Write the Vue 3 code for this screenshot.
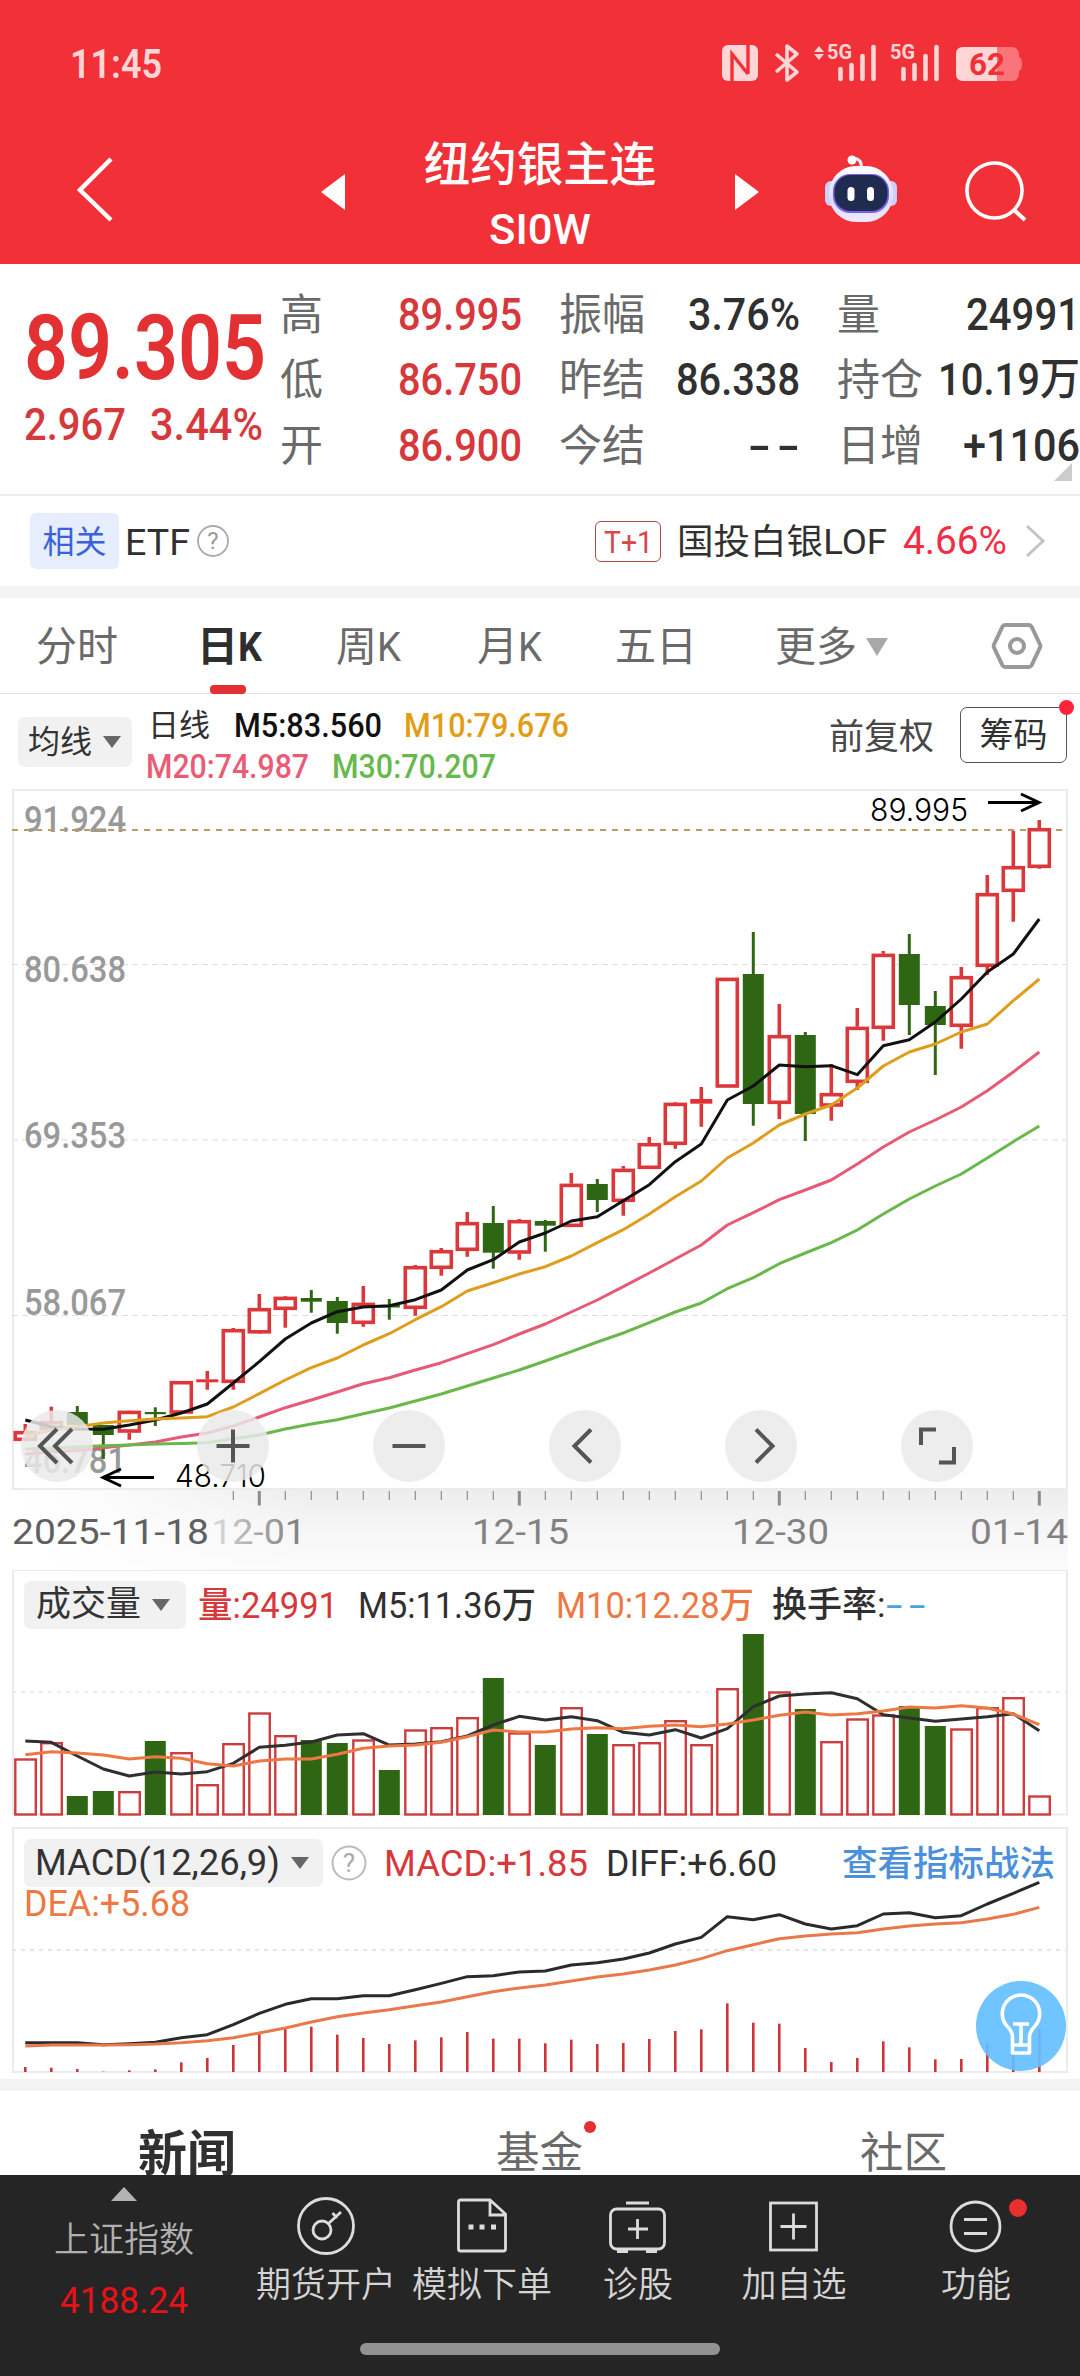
<script setup>
// v-fit="px": squeezes or stretches a label horizontally to the given width
const vFit = {
  mounted(el, { value }) {
    const natural = el.getBoundingClientRect().width
    el.style.width = value + 'px'
    el.style.transform = `scaleX(${value / natural})`
  },
}

const quotes = [
  { label: '高', value: '89.995', w: 124, up: true },
  { label: '振幅', value: '3.76%', w: 112 },
  { label: '量', value: '24991', w: 114 },
  { label: '低', value: '86.750', w: 124, up: true },
  { label: '昨结', value: '86.338', w: 124 },
  { label: '持仓', value: '10.19万', w: 142 },
  { label: '开', value: '86.900', w: 124, up: true },
  { label: '今结', value: '--', w: 58, none: true },
  { label: '日增', value: '+1106', w: 117 },
]

const X0 = 25.3
const STEP = 26
const cx = (i) => X0 + i * STEP
const line = (ys) => ys.map((y, i) => `${cx(i).toFixed(1)},${y}`).join(' ')

// [rising, high, body top, body bottom, low] in chart coordinates
const candles = [
  [1, 1424, 1431, 1441, 1441], [1, 1406.7, 1421, 1430, 1430], [0, 1406, 1412, 1425, 1425],
  [0, 1425, 1425, 1435, 1459], [1, 1411, 1410.7, 1432.7, 1439.7], [0, 1407.3, 1412, 1414.2, 1426],
  [1, 1381, 1381, 1413.7, 1413.7], [1, 1371, 1379.3, 1382.3, 1389.7], [1, 1328, 1329, 1383, 1389.7],
  [1, 1294, 1308, 1333.5, 1334], [1, 1296, 1296.7, 1310, 1327.7], [0, 1290, 1298, 1301.7, 1312.7],
  [0, 1297, 1301, 1323, 1333.7], [1, 1286, 1302.7, 1324, 1326.7], [0, 1299, 1305, 1307.5, 1319.7],
  [1, 1265, 1266, 1309, 1315.7], [1, 1248, 1250, 1269, 1275.7], [1, 1212, 1222, 1251, 1256.7],
  [0, 1206, 1223, 1252.7, 1268.7], [1, 1219, 1220, 1253.7, 1259.7], [0, 1220, 1221, 1225.7, 1251.7],
  [1, 1173, 1183.7, 1227, 1227], [0, 1179, 1184, 1200, 1212], [1, 1166, 1168.7, 1202, 1215.7],
  [1, 1137, 1143, 1169, 1169], [1, 1102, 1102.7, 1145, 1148.7], [1, 1087, 1099, 1103.7, 1126.7],
  [1, 977.7, 977.7, 1087.7, 1087.7], [0, 932, 974, 1104, 1125.7], [1, 1004, 1035, 1104, 1119],
  [0, 1032, 1035, 1114, 1141], [1, 1064, 1093, 1106.7, 1120.7], [1, 1008, 1026.7, 1083, 1090],
  [1, 951, 953.7, 1029, 1040.7], [0, 934, 954, 1005, 1035], [0, 991, 1006, 1025, 1075],
  [1, 967, 976, 1027, 1048.7], [1, 875, 893, 967, 975], [1, 831, 866, 892, 921.7],
  [1, 820, 828, 868, 868.7],
]
const ma5 = [1420, 1426.7, 1429, 1429.3, 1425, 1420, 1413, 1404, 1383, 1361.7, 1339, 1323, 1311.7, 1307, 1305.7, 1299.7, 1290, 1270, 1259.7, 1242, 1233, 1221, 1216.7, 1200.7, 1184.7, 1161.7, 1144, 1100, 1086, 1065, 1066.7, 1065.7, 1074.7, 1045.7, 1039.7, 1022, 999, 972, 954, 919]
const ma10 = [1436, 1430, 1426.7, 1423, 1420.7, 1419, 1418, 1416.7, 1407, 1393.7, 1380, 1367.7, 1358, 1345, 1333.7, 1319.7, 1306.7, 1291, 1282.7, 1274, 1266.7, 1256, 1242.7, 1229.7, 1214, 1196.7, 1181, 1158, 1143, 1125, 1114, 1105, 1088, 1066, 1052, 1044, 1032, 1024, 1000.7, 979]
const ma20 = [1454, 1452, 1450.7, 1447.7, 1445, 1442, 1437, 1433, 1426, 1417, 1407.7, 1400, 1392, 1383.7, 1377.7, 1370, 1362.7, 1353.7, 1344.7, 1334, 1324, 1312, 1300, 1286.7, 1273, 1259, 1245, 1225, 1212.7, 1199.7, 1190, 1180, 1164, 1147, 1132, 1120, 1107, 1090.7, 1072, 1052]
const ma30 = [1449, 1448, 1447, 1445.7, 1445, 1444, 1443.4, 1442.7, 1438.7, 1435, 1429, 1424, 1419.7, 1413.7, 1408, 1401, 1394, 1386, 1378, 1370, 1361, 1351.7, 1342, 1333, 1322.7, 1312, 1303, 1288.7, 1277.7, 1263.7, 1253, 1242.7, 1230, 1214, 1199, 1186, 1174, 1158, 1141.7, 1126]

const priceLabels = [['91.924', 832], ['80.638', 982], ['69.353', 1148], ['58.067', 1315], ['46.781', 1473]]
const ticks = Array.from({ length: 32 }, (_, k) => k + 8)

const volTops = [1759, 1742.7, 1796, 1791, 1791.7, 1741, 1752.7, 1784.7, 1743.7, 1713, 1735.7, 1740, 1743, 1740, 1770, 1730, 1727.7, 1717.7, 1678, 1733, 1745, 1707.7, 1734, 1744.7, 1742.7, 1720.7, 1744.7, 1688.7, 1634, 1692, 1709, 1741.7, 1719, 1715, 1706, 1726, 1729, 1707.7, 1697.7, 1796]
const third = (base) => (v) => base + v / 3
const vm5 = [543, 547, 588, 627, 648, 636, 642, 635, 610, 562, 556, 546, 525, 521, 555, 552, 545, 528, 495, 469, 480, 470, 482, 517, 525, 509, 534, 506, 440, 408, 402, 398, 416, 464, 474, 484, 477, 470, 461, 512].map(third(1560))
const vm10 = [584, 575, 579, 585, 597, 590, 595, 611, 618, 603, 597, 597, 583, 565, 558, 555, 547, 530, 510, 516, 516, 507, 503, 506, 499, 495, 500, 492, 480, 466, 456, 465, 461, 453, 441, 444, 437, 444, 462, 494].map(third(1560))

const diff = [668, 668, 668, 674, 671, 667, 653, 644, 614, 580, 553, 536, 536, 527, 527, 509, 490, 470, 467, 456, 453, 435, 428, 417, 399, 372, 352, 290, 299, 284, 312, 327, 317, 282, 278, 293, 287, 252, 220, 187].map(third(1820))
const dea = [678, 675, 675, 675, 674, 672, 668, 662, 653, 639, 624, 606, 590, 579, 569, 557, 546, 530, 515, 504, 495, 483, 471, 462, 450, 435, 416, 392, 374, 356, 348, 342, 338, 327, 318, 312, 308, 297, 283, 262].map(third(1820))
const macd = [741, 743, 747, 755, 751, 748, 727, 714, 675, 638, 626, 620, 644, 654, 672, 661, 652, 636, 656, 656, 670, 659, 672, 669, 657, 633, 628, 550, 608, 611, 684, 726, 714, 664, 682, 718, 717, 669, 640, 626].map(third(1820))
</script>

<template>
  <div class="screen">
    <header class="top">
      <div class="status">
        <span v-fit="92" class="clock">11:45</span>
        <svg class="status-icons" width="310" height="50" viewBox="715 40 310 50">
          <rect x="722" y="46" width="36" height="36" rx="6" fill="#ffd5d6" />
          <path d="M732 82V55L748 75 M748 46V75 M732 55L748 75" fill="none" stroke="#f23037" stroke-width="3.400" />
          <path d="M776 55l21 18-10 8V47l10 8-21 18" fill="none" stroke="#ffd5d6" stroke-width="3.600" stroke-linejoin="round" />
          <path d="M814 53l5-6 5 6z M814 55l5 6 5-6z" fill="#ffd5d6" />
          <g stroke="#ffd5d6" stroke-width="4.600" stroke-linecap="round">
            <path d="M840.500 70v10M851.500 66v14M862.500 57v23M873.500 48v32" />
            <path d="M903.500 70v10M914.500 66v14M925.500 57v23M936.500 48v32" />
          </g>
          <text x="827" y="60" textLength="25" lengthAdjust="spacingAndGlyphs" class="net">5G</text>
          <text x="890" y="60" textLength="25" lengthAdjust="spacingAndGlyphs" class="net">5G</text>
          <path d="M963 48h34v34h-34q-7 0-7-7v-20q0-7 7-7z" fill="#ffd5d6" />
          <path d="M997 48h14q8 0 8 8v2q3 1 3 7t-3 7v2q0 8-8 8h-14z" fill="#f97579" />
          <text x="969" y="76" textLength="36" lengthAdjust="spacingAndGlyphs" class="batt">62</text>
        </svg>
      </div>
      <div class="nav">
        <svg width="50" height="80" viewBox="70 150 50 80" class="back"><path d="M111 159L80 190l31 30" fill="none" stroke="#fff" stroke-width="4.500" /></svg>
        <svg width="26" height="40" viewBox="0 0 26 40" class="prev"><path d="M25 2v36L1 20z" fill="#fff" /></svg>
        <div class="title">
          <span class="name">纽约银主连</span>
          <span v-fit="102" class="code">SI0W</span>
        </div>
        <svg width="26" height="40" viewBox="0 0 26 40" class="next"><path d="M1 2v36l24-18z" fill="#fff" /></svg>
        <svg width="80" height="80" viewBox="820 150 80 80" class="robot">
          <defs>
            <linearGradient id="shell" x1="0" y1="0" x2="0" y2="1"><stop offset="0" stop-color="#fff" /><stop offset=".6" stop-color="#d9dcff" /><stop offset="1" stop-color="#f3e8ff" /></linearGradient>
          </defs>
          <path d="M861 169q2-10-8-11" fill="none" stroke="#e9e6ff" stroke-width="3" />
          <circle cx="852" cy="160" r="4.500" fill="#fff" />
          <rect x="825" y="181" width="12" height="25" rx="6" fill="#cfd0fa" />
          <rect x="885" y="181" width="12" height="25" rx="6" fill="#cfd0fa" />
          <rect x="829" y="166" width="64" height="56" rx="27" fill="url(#shell)" />
          <rect x="833" y="174" width="56" height="39" rx="17" fill="#7660e8" />
          <rect x="834.500" y="175" width="53" height="36" rx="16" fill="#202b50" />
          <rect x="847.500" y="187" width="7" height="14" rx="3.500" fill="#fff" />
          <rect x="867" y="187" width="7" height="14" rx="3.500" fill="#fff" />
        </svg>
        <svg width="70" height="70" viewBox="960 155 70 70" class="search"><path d="M1014 210l11 10" stroke="#fff" stroke-width="4" /><circle cx="994.500" cy="190.500" r="27.500" fill="none" stroke="#fff" stroke-width="3.600" /></svg>
      </div>
    </header>

    <section class="quote">
      <div class="last">
        <span v-fit="242" class="price">89.305</span>
        <div class="chg"><span v-fit="102">2.967</span><span v-fit="113">3.44%</span></div>
      </div>
      <div class="grid">
        <div v-for="q in quotes" :key="q.label" class="cell">
          <span class="k">{{ q.label }}</span>
          <span v-fit="q.w" class="v" :class="{ up: q.up, none: q.none }">{{ q.value }}</span>
        </div>
      </div>
      <i class="corner"></i>
    </section>

    <section class="etf">
      <span class="tag">相关</span>
      <span v-fit="65" class="etf-t">ETF</span>
      <svg class="q1" width="34" height="34" viewBox="0 0 34 34"><circle cx="17" cy="17" r="15" fill="none" stroke="#aaa" stroke-width="1.800" /><text x="17" y="25" text-anchor="middle" class="qm">?</text></svg>
      <span class="t1"><b v-fit="49">T+1</b></span>
      <span v-fit="210" class="fund">国投白银LOF</span>
      <span v-fit="104" class="pct">4.66%</span>
      <svg width="22" height="34" viewBox="0 0 22 34"><path d="M2 2l16 15L2 32" fill="none" stroke="#c4c4c4" stroke-width="3" /></svg>
    </section>
    <div class="band"></div>

    <nav class="tabs">
      <span>分时</span><span class="on">日<b v-fit="24">K</b></span><span>周<b v-fit="24">K</b></span><span>月<b v-fit="24">K</b></span><span>五日</span><span>更多<i class="tri big"></i></span>
      <svg width="52" height="50" viewBox="0 0 52 50"><path d="M14.500 4h23q2 0 3 1.500L49 23.500q.7 1.500 0 3L40.500 44.500q-1 1.500-3 1.500h-23q-2 0-3-1.500L3 26.500q-.7-1.500 0-3L11.500 5.500q1-1.500 3-1.500z" fill="none" stroke="#999" stroke-width="4" /><circle cx="26" cy="25" r="7" fill="none" stroke="#999" stroke-width="4" /></svg>
    </nav>

    <section class="ma">
      <span class="pill p1">均线<i class="tri"></i></span>
      <div class="ma-vals">
        <div><span class="cn">日线</span><span v-fit="148" class="m5">M5:83.560</span><span v-fit="165" class="m10">M10:79.676</span></div>
        <div><span v-fit="163" class="m20">M20:74.987</span><span v-fit="164" class="m30">M30:70.207</span></div>
      </div>
      <span class="fq">前复权</span>
      <span class="chip">筹码<i class="dot"></i></span>
    </section>

    <section class="panel main">
      <svg width="1080" height="785" viewBox="0 785 1080 785">
        <defs>
          <linearGradient id="shade" x1="0" y1="0" x2="0" y2="1"><stop offset="0" stop-color="#ededed" /><stop offset=".5" stop-color="#f6f6f6" /><stop offset="1" stop-color="#fbfbfb" /></linearGradient>
          <linearGradient id="fadeL" x1="0" y1="0" x2="1" y2="0"><stop offset="0" stop-color="#fff" /><stop offset=".25" stop-color="#fff" stop-opacity=".85" /><stop offset="1" stop-color="#fff" stop-opacity="0" /></linearGradient>
          <linearGradient id="dateFade" gradientUnits="userSpaceOnUse" x1="212" y1="0" x2="300" y2="0"><stop offset="0" stop-color="#ddd" /><stop offset=".5" stop-color="#aaa" /><stop offset="1" stop-color="#808080" /></linearGradient>
        </defs>
        <rect x="12" y="1490" width="1056" height="80" fill="url(#shade)" />
        <rect x="12" y="1490" width="300" height="80" fill="url(#fadeL)" />
        <rect x="13" y="790" width="1054" height="699" fill="none" stroke="#ebebeb" stroke-width="2" />
        <path d="M12 964.500H1066M12 1315.500H1066" stroke="#dedede" stroke-width="1" stroke-dasharray="6 4" />
        <path d="M12 1139.800H1066" stroke="#ececec" stroke-width="2" stroke-dasharray="6 4" />
        <text v-for="p in priceLabels" :key="p[0]" x="24" :y="p[1]" textLength="102" lengthAdjust="spacingAndGlyphs" class="axis">{{ p[0] }}</text>
        <path d="M12 830H1066" stroke="#b79c63" stroke-width="2" stroke-dasharray="6 6" />
        <g v-for="(c, i) in candles" :key="i">
          <template v-if="c[0]">
            <path :d="`M${cx(i)} ${c[1]}V${c[2]}M${cx(i)} ${c[3]}V${c[4]}`" stroke="#dc383b" stroke-width="3.600" />
            <rect v-if="c[3] - c[2] < 6" :x="cx(i) - 11" :y="c[2]" width="22" :height="c[3] - c[2]" fill="#e23235" />
            <rect v-else :x="cx(i) - 10" :y="c[2] + 1.7" width="20" :height="c[3] - c[2] - 3.4" fill="#fff" stroke="#dc383b" stroke-width="3.600" />
          </template>
          <template v-else>
            <path :d="`M${cx(i)} ${c[1]}V${c[4]}`" stroke="#2f6614" stroke-width="3" />
            <rect :x="cx(i) - 10.5" :y="c[2]" width="21" :height="c[3] - c[2]" fill="#2f6614" />
          </template>
        </g>
        <g fill="none" stroke-width="3" stroke-linejoin="round">
          <polyline :points="line(ma5)" stroke="#111" />
          <polyline :points="line(ma10)" stroke="#df9d1d" />
          <polyline :points="line(ma20)" stroke="#e65a76" />
          <polyline :points="line(ma30)" stroke="#69b84c" />
        </g>
        <text x="870" y="820.500" textLength="98" lengthAdjust="spacingAndGlyphs" class="note">89.995</text>
        <path d="M988 802.500h50M1021 794l18 8.500-18 8.500" fill="none" stroke="#000" stroke-width="3" />
        <text x="175" y="1487" textLength="91" lengthAdjust="spacingAndGlyphs" class="note">48.710</text>
        <path d="M154 1477.500h-50M121 1469l-18 8.500 18 8.500" fill="none" stroke="#000" stroke-width="3" />
        <path v-for="t in ticks" :key="t" :d="`M${cx(t)} 1491v${t % 10 === 9 ? 14.5 : 9}`" stroke="#8c8c8c" :stroke-width="t % 10 === 9 ? 3 : 1.2" />
        <g class="date" fill="#828282">
          <text x="12" y="1544" textLength="197" lengthAdjust="spacingAndGlyphs" class="first">2025-11-18</text>
          <text x="211" y="1544" textLength="95" lengthAdjust="spacingAndGlyphs" fill="url(#dateFade)">12-01</text>
          <text x="472" y="1544" textLength="97" lengthAdjust="spacingAndGlyphs">12-15</text>
          <text x="732" y="1544" textLength="97" lengthAdjust="spacingAndGlyphs">12-30</text>
          <text x="970" y="1544" textLength="98" lengthAdjust="spacingAndGlyphs">01-14</text>
        </g>
      </svg>
      <div class="ctrls">
        <svg viewBox="0 0 72 72"><path d="M36 19L19 36l17 17M51 19L34 36l17 17" /></svg>
        <svg viewBox="0 0 72 72"><path d="M36 19.500v33M19.500 36h33" /></svg>
        <svg viewBox="0 0 72 72"><path d="M19.500 36h33" /></svg>
        <svg viewBox="0 0 72 72"><path d="M42 19.500L25.500 36 42 52.500" /></svg>
        <svg viewBox="0 0 72 72"><path d="M31 19.500L47.500 36 31 52.500" /></svg>
        <svg viewBox="0 0 72 72"><path d="M20 35V19.500h15M53 37v15.500H38" /></svg>
      </div>
    </section>

    <section class="panel vol">
      <svg width="1080" height="250" viewBox="0 1570 1080 250">
        <rect x="13" y="1570" width="1054" height="244.500" fill="#fff" stroke="#ebebeb" stroke-width="2" />
        <path d="M12 1692H1066" stroke="#ececec" stroke-width="2" stroke-dasharray="4 5" />
        <g v-for="(t, i) in volTops" :key="i">
          <rect v-if="candles[i][0]" :x="cx(i) - 10" :y="t + 0.5" width="20.500" :height="1814 - t" fill="#fff" stroke="#cc3d40" stroke-width="2.400" />
          <rect v-else :x="cx(i) - 10.5" :y="t" width="21" :height="1815 - t" fill="#2f6614" />
        </g>
        <g fill="none" stroke-width="3" stroke-linejoin="round">
          <polyline :points="line(vm5)" stroke="#2f2f2f" />
          <polyline :points="line(vm10)" stroke="#ee7844" />
        </g>
      </svg>
      <div class="legend">
        <span class="pill p2">成交量<i class="tri"></i></span>
        <span v-fit="140" class="red">量:24991</span>
        <span v-fit="178" class="l2">M5:11.36万</span>
        <span v-fit="198" class="org">M10:12.28万</span>
        <span class="l3">换手率:</span><span v-fit="46" class="blue">--</span>
      </div>
    </section>

    <section class="panel macd">
      <svg width="1080" height="259" viewBox="0 1820 1080 259">
        <rect x="13" y="1828" width="1054" height="244" fill="none" stroke="#ebebeb" stroke-width="2" />
        <path d="M12 1950H1066" stroke="#e6e6e6" stroke-width="2" stroke-dasharray="4 5" />
        <path v-for="(t, i) in macd" :key="i" :d="`M${cx(i)} 2072V${t}`" stroke="#cc3538" stroke-width="2.600" />
        <g fill="none" stroke-width="3" stroke-linejoin="round">
          <polyline :points="line(diff)" stroke="#2a2a2a" />
          <polyline :points="line(dea)" stroke="#e9794a" />
        </g>
        <circle cx="1021" cy="2026" r="45" fill="#64bfff" fill-opacity=".92" />
        <g fill="none" stroke="#fff" stroke-width="3.600" stroke-linejoin="round">
          <path d="M1012.500 2036q-1-6-6-10.500a18.700 18.700 0 1 1 29 0q-5 4.500-6 10.500v17h-17z" />
          <path d="M1012.500 2045h17M1013 2024h16M1021 2024v20" />
        </g>
      </svg>
      <div class="legend mleg">
        <span class="pill p3"><b v-fit="245">MACD(12,26,9)</b><i class="tri"></i></span>
        <svg class="q2" width="36" height="36" viewBox="0 0 36 36"><circle cx="18" cy="18" r="16.500" fill="none" stroke="#bbb" stroke-width="2" /><text x="18" y="27" text-anchor="middle" class="qm2">?</text></svg>
        <span v-fit="204" class="red">MACD:+1.85</span>
        <span v-fit="171" class="l4">DIFF:+6.60</span>
        <span class="link">查看指标战法</span>
        <span v-fit="166" class="org dea">DEA:+5.68</span>
      </div>
    </section>
    <div class="band b2"></div>

    <nav class="news">
      <span class="cur">新闻</span><span>基金<i class="dot"></i></span><span>社区</span>
    </nav>

    <footer class="dock">
      <div class="items">
        <div class="idx">
          <i class="up-tri"></i>
          <span>上证指数</span>
          <span v-fit="128" class="num">4188.24</span>
        </div>
        <div class="it">
          <svg viewBox="0 0 64 64"><circle cx="32" cy="32" r="27.500" /><circle cx="28" cy="36" r="9" /><path d="M34.500 29.500L47 18M38.500 19l4.500 5" /></svg>
          <span>期货开户</span>
        </div>
        <div class="it">
          <svg viewBox="0 0 64 64"><path d="M40 6H10.500q-2 0-2 2v47q0 2 2 2h43q2 0 2-2V20zM40 6v15h15" /><path d="M18.500 33h5M29.500 33h5M41 33h5" stroke-width="5" /></svg>
          <span>模拟下单</span>
        </div>
        <div class="it">
          <svg viewBox="0 0 64 64"><rect x="4.500" y="15" width="54" height="40" rx="6" /><path d="M20 9h23M31.500 25v20M22 35h20" /><path d="M11 57h11M40 57h11" stroke-width="4" /></svg>
          <span>诊股</span>
        </div>
        <div class="it">
          <svg viewBox="0 0 64 64"><rect x="8.500" y="9" width="46" height="47" /><path d="M31.500 19.500v26M18.500 32.500h26" /></svg>
          <span>加自选</span>
        </div>
        <div class="it">
          <svg viewBox="0 0 64 64"><circle cx="31.500" cy="32.500" r="24.500" /><path d="M20 25.500h23M20 39.500h23" /></svg>
          <span>功能</span>
          <i class="dot"></i>
        </div>
      </div>
      <div class="home"></div>
    </footer>
  </div>
</template>

<style>
body { background: #fff; overflow: hidden; }
</style>

<style scoped>
.screen {
  width: 1080px; height: 2376px; overflow: hidden; background: #fff; color: #303030;
  font-family: Roboto, "Noto Sans CJK SC", sans-serif; display: flex; flex-direction: column;
}
.screen > * { flex: none; }
span, b { white-space: nowrap; flex: none; transform-origin: left center; }
b { font-weight: inherit; display: inline-block; }
i { display: inline-block; flex: none; }
svg { flex: none; display: block; }

.top { height: 264px; background: #f23037; color: #fff; }
.status { height: 128px; display: flex; align-items: center; padding-left: 70px; }
.clock { font-size: 41px; line-height: 50px; color: #ffd5d6; font-weight: 600; }
.status-icons { margin-left: 553px; }
.net { font-size: 20px; font-weight: 700; fill: #ffd5d6; }
.batt { font-size: 31px; font-weight: 700; fill: #f23037; }
.nav { height: 136px; display: flex; align-items: flex-start; }
.back { margin: 22px 0 0 70px; }
.prev { margin: 44px 0 0 200px; }
.title { width: 388px; display: flex; flex-direction: column; align-items: center; }
.name { font-size: 46.5px; font-weight: 500; line-height: 60px; margin-top: 7px; }
.code { font-size: 43px; line-height: 50px; margin-top: 9px; font-weight: 500; }
.next { margin-top: 44px; }
.robot { margin: 22px 0 0 60px; }
.search { margin: 27px 0 0 60px; }

.quote { height: 232px; border-bottom: 2px solid #ececec; display: flex; position: relative; box-sizing: border-box; }
.last { width: 254px; padding-left: 24px; color: #e23033; }
.price { display: block; width: max-content; font-size: 90px; font-weight: 600; line-height: 100px; margin-top: 35px; }
.chg { display: flex; gap: 24px; font-size: 44px; font-weight: 500; line-height: 50px; margin-top: 1px; color: #d7383b; }
.grid { margin: 18px 0 0 3px; display: grid; grid-template-columns: 242px 241px 243px; column-gap: 37px; grid-auto-rows: 65.500px; height: 197px; width: 800px; }
.cell { display: flex; justify-content: space-between; align-items: center; }
.k { font-size: 43px; color: #6a6a6a; line-height: 60px; }
.v { font-size: 44.500px; font-weight: 500; line-height: 60px; }
.none { letter-spacing: 4px; margin-right: -6px; }
.up { color: #d7383b; }
.corner { position: absolute; right: 8px; bottom: 13px; border-left: 18px solid transparent; border-bottom: 18px solid #ccc; }

.etf { height: 90px; display: flex; align-items: center; padding-left: 30px; }
.tag { width: 89px; height: 54px; padding-top: 2px; border-radius: 6px; background: #e6edfc; color: #3b62da; font-size: 32px; line-height: 55px; text-align: center; }
.etf-t { margin-left: 6px; font-size: 36px; line-height: 54px; padding-top: 3px; }
.q1 { margin-left: 6px; }
.qm { font-size: 24px; fill: #999; }
.t1 { margin-left: 365px; width: 64px; height: 39px; border: 1.500px solid #b0494c; border-radius: 6px; color: #d9474b; font-size: 31px; line-height: 41px; display: flex; justify-content: center; }
.fund { margin-left: 16px; font-size: 35px; line-height: 54px; padding-top: 3px; }
.pct { margin-left: 16px; font-size: 38px; font-weight: 450; line-height: 56px; color: #ef2f45; }
.etf > svg:last-child { margin-left: 18px; }
.band { height: 12px; background: #f4f4f4; }

.tabs { height: 96px; border-bottom: 1.500px solid #e2e2e2; box-sizing: border-box; display: grid; grid-template-columns: 161px 139px 141px 138px 160px 220px 60px; align-items: center; padding: 2px 0 0 36px; font-size: 41px; color: #6a6a6a; line-height: 92px; }
.tabs .on { color: #2e2e2e; font-weight: 700; position: relative; }
.tabs .on::after { content: ""; position: absolute; left: 13px; bottom: -1px; width: 36px; height: 9px; border-radius: 4px; background: #e23033; }
.tabs svg { margin: -2px 0 0 -4px; }
.tri { border: 9px solid transparent; border-top: 12px solid #666; border-bottom: 0; margin-left: 11px; vertical-align: middle; }
.tri.big { border-width: 18px 11px 0; border-top-color: #a8a8a8; margin-left: 9px; margin-top: -6px; }

.ma { height: 91px; display: flex; padding-left: 18px; }
.pill { background: #f1f1f1; border-radius: 7px; display: flex; align-items: center; color: #333; }
.p1 { width: 104px; height: 50px; margin-top: 23px; padding-left: 10px; font-size: 32px; line-height: 50px; }
.ma-vals { width: 682px; padding: 11px 0 0 14px; font-size: 33.500px; font-weight: 500; }
.ma-vals div { display: flex; align-items: center; line-height: 41px; height: 41px; }
.cn { font-size: 31px; margin-left: 2px; font-weight: 400; }
.m5 { color: #111; margin-left: 24px; }
.m10 { color: #e29d16; margin-left: 22px; }
.m20 { color: #ea5c76; }
.m30 { color: #68b94b; margin-left: 23px; }
.fq { font-size: 35px; line-height: 50px; margin-top: 19px; color: #484848; margin-left: 1px; }
.chip { position: relative; margin: 13px 0 0 26px; width: 105px; height: 54px; border: 1.500px solid #555; border-radius: 7px; font-size: 34px; line-height: 55px; text-align: center; }
.dot { background: #e92e30; border-radius: 50%; position: absolute; }
.chip .dot { width: 15px; height: 15px; right: -8px; top: -8px; background: #ff2438; }

.panel { display: grid; }
.panel > * { grid-area: 1 / 1; }
.axis { font-size: 36px; fill: #999; font-weight: 500; }
.note { font-size: 31px; font-weight: 300; font-family: Inter, Roboto, sans-serif; }
.date { font-size: 35.500px; font-weight: 450; }
.date .first { fill: #606060; }
.ctrls { display: flex; gap: 104px; margin: 625px 0 0 21px; height: 72px; }
.ctrls svg { width: 72px; height: 72px; border-radius: 50%; background: rgba(234, 234, 234, .84); fill: none; stroke: #555; stroke-width: 4; }
.legend { display: flex; align-items: center; height: 48px; margin: 11px 0 0 24px; font-size: 36px; line-height: 46px; }
.legend > span:not(.pill) { padding-top: 2px; font-weight: 450; }
.vol { height: 250px; }
.p2 { width: 150px; height: 48px; padding-left: 12px; font-size: 35px; margin-right: 12px; }
.red { color: #d7383b; }
.org { color: #ee7844; }
.l2 { margin: 0 20px 0 20px; }
.l3 { font-size: 35px; margin-left: 18px; }
.blue { color: #45a4e0; margin-left: 1px; letter-spacing: 4px; }
.macd { height: 259px; }
.mleg { margin-top: 19px; flex-wrap: wrap; align-content: flex-start; height: 100px; width: 1056px; }
.p3 { width: 288px; height: 48px; padding-left: 11px; margin-right: 8px; }
.q2 { margin-right: 17px; }
.qm2 { font-size: 26px; fill: #aaa; }
.l4 { margin-left: 18px; }
.link { font-size: 35.500px; color: #4a90dc; margin-left: 65px; }
.legend .dea { margin-top: -8px; }

.b2 { background: #f3f3f3; }
.news { height: 84px; display: flex; overflow: hidden; font-size: 43.500px; line-height: 60px; color: #6a6a6a; }
.news span { margin-top: 33px; position: relative; }
.news .cur { margin: 34px 260px 0 138px; font-size: 49px; font-weight: 700; color: #303030; }
.news span:last-child { margin-left: 277px; }
.news .dot { width: 12px; height: 12px; left: 88px; top: -3px; }
.dock { height: 201px; background: #252525; color: #d4d4d4; }
.items { display: grid; grid-template-columns: 248px 156px 156px 156px 156px 208px; height: 168px; font-size: 35px; font-weight: 350; }
.it { display: flex; flex-direction: column; align-items: center; position: relative; line-height: 50px; }
.it svg { width: 64px; height: 64px; margin: 19px 0 3px; fill: none; stroke: #dcdcdc; stroke-width: 2.800; }
.it .dot { width: 18px; height: 18px; left: 137px; top: 24px; }
.idx { display: flex; flex-direction: column; align-items: center; color: #b0b0b0; line-height: 50px; }
.up-tri { border: 13px solid transparent; border-bottom: 14px solid #b3b3b3; border-top: 0; margin-top: 12px; }
.idx span { margin-top: 15px; }
.idx .num { color: #e61218; font-size: 37px; margin-top: 10px; font-weight: 400; }
.home { width: 360px; height: 12px; border-radius: 6px; background: #929292; margin: 0 auto; }
</style>
